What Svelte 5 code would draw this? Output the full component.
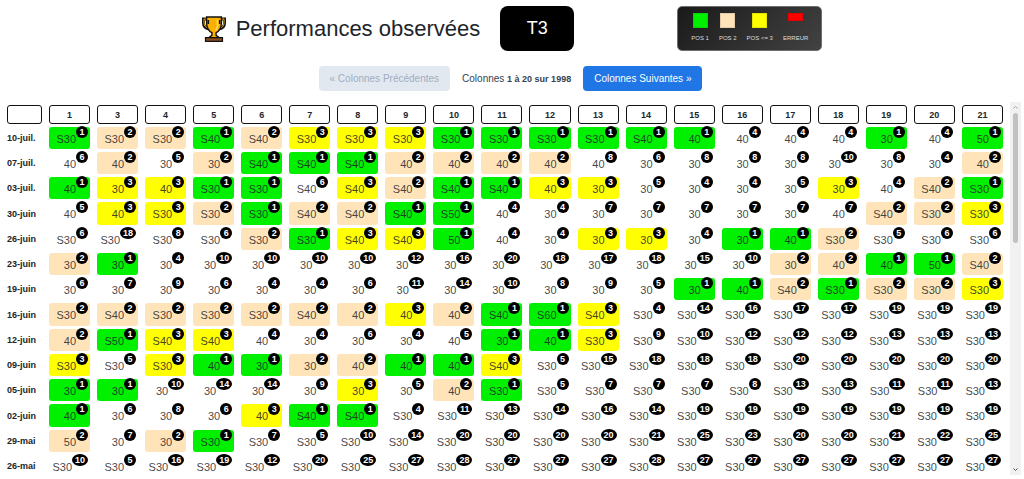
<script>
    const legend = [
        { label: 'POS 1', kind: 'first' },
        { label: 'POS 2', kind: 'second' },
        { label: 'POS <= 3', kind: 'third' },
        { label: 'ERREUR', kind: 'error' }
    ];

    const columns = [1, 3, 4, 5, 6, 7, 8, 9, 10, 11, 12, 13, 14, 15, 16, 17, 18, 19, 20, 21];

    // each entry is value:position
    const source = [
        ['10-juil.', 'S30:1 S30:2 S30:2 S40:1 S40:2 S30:3 S30:3 S30:3 S30:1 S30:1 S30:1 S30:1 S40:1 40:1 40:4 40:4 40:4 30:1 40:4 50:1'],
        ['07-juil.', '40:6 40:2 30:5 30:2 S40:1 S40:1 S40:1 40:2 40:2 40:2 40:2 40:8 30:6 30:8 30:8 30:8 30:10 30:8 30:4 40:2'],
        ['03-juil.', '40:1 30:3 40:3 S30:1 S30:1 S40:6 S40:3 S40:2 S40:1 S40:1 40:3 30:3 30:5 30:4 30:4 30:5 30:3 40:4 S40:2 S30:1'],
        ['30-juin', '40:5 40:3 S30:3 S30:2 S30:1 S40:2 S40:2 S40:1 S50:1 40:4 30:4 30:7 30:7 30:7 30:7 30:7 40:7 S40:2 S30:2 S30:3'],
        ['26-juin', 'S30:6 S30:18 S30:8 S30:6 S30:2 S30:1 S40:3 S40:3 50:1 40:4 30:4 30:3 30:3 30:4 30:1 40:1 S30:2 S30:5 S30:6 S30:6'],
        ['23-juin', '30:2 30:1 30:4 30:10 30:10 30:10 30:10 30:12 30:16 30:20 30:18 30:17 30:18 30:15 30:10 30:2 40:2 40:1 50:1 S40:2'],
        ['19-juin', '30:6 30:7 30:9 30:6 30:4 30:4 30:6 30:11 30:14 30:10 30:8 30:9 30:5 30:1 40:1 S40:2 S30:1 S30:2 S30:2 S30:3'],
        ['16-juin', 'S30:2 S40:2 S30:2 S30:2 S30:2 S40:2 40:2 40:3 40:2 S40:1 S60:1 S40:3 S30:4 S30:14 S30:16 S30:17 S30:17 S30:19 S30:19 S30:19'],
        ['12-juin', '40:2 S50:1 S40:3 S40:3 40:4 30:4 30:6 30:4 40:5 30:1 40:1 S30:3 S30:9 S30:10 S30:12 S30:12 S30:12 S30:13 S30:13 S30:13'],
        ['09-juin', 'S30:3 S30:5 S30:3 40:1 30:1 30:2 40:2 40:1 40:1 S40:3 S30:5 S30:15 S30:18 S30:18 S30:18 S30:20 S30:20 S30:20 S30:20 S30:20'],
        ['05-juin', '30:1 30:1 30:10 30:14 30:14 30:9 30:3 30:5 40:2 S30:1 S30:5 S30:7 S30:7 S30:7 S30:8 S30:13 S30:13 S30:11 S30:11 S30:13'],
        ['02-juin', '40:1 30:6 30:8 30:6 40:3 S40:1 S40:1 S30:4 S30:11 S30:13 S30:14 S30:16 S30:14 S30:19 S30:19 S30:19 S30:19 S30:19 S30:19 S30:19'],
        ['29-mai', '50:2 30:7 30:2 S30:1 S30:7 S30:5 S30:10 S30:14 S30:20 S30:20 S30:20 S30:20 S30:21 S30:25 S30:23 S30:20 S30:20 S30:21 S30:22 S30:25'],
        ['26-mai', 'S30:10 S30:5 S30:16 S30:19 S30:12 S30:20 S30:25 S30:27 S30:28 S30:27 S30:27 S30:27 S30:28 S30:27 S30:27 S30:27 S30:27 S30:27 S30:27 S30:27']
    ];

    const kinds = { 1: 'first', 2: 'second', 3: 'third' };

    const rows = source.map(([date, line]) => ({
        date,
        cells: line.split(' ').map((entry) => {
            const [value, position] = entry.split(':');
            return { value, position, kind: kinds[position] || '' };
        })
    }));
</script>

<div class="page">
    <header class="top">
        <h1>
            <svg class="trophy" viewBox="0 0 24 26" aria-hidden="true">
                <path d="M5 3H1.500V7c0 3.200 2.200 5.300 5.600 6M19 3h3.500V7c0 3.200-2.200 5.300-5.600 6" fill="none" stroke="#111" stroke-width="3" />
                <path d="M5 3H2V7c0 2.800 2 4.800 5 5.500M19 3h3V7c0 2.800-2 4.800-5 5.500" fill="none" stroke="#f5a800" stroke-width="1" />
                <path d="M4.600 1h14.800v5.500c0 5-2 8.600-5.300 10.200v2.600l4 3H5.900l4-3v-2.600C6.600 15 4.600 11.500 4.600 6.500z" fill="#fcb100" stroke="#111" stroke-width="1.400" />
                <path d="M3.500 21.700h17v3.600h-17z" fill="#8a4b20" stroke="#111" stroke-width="1.200" />
                <path d="M15.500 3.500v6c0 2-.8 3.600-2 4.800" fill="none" stroke="#ffd866" stroke-width="1.600" />
                <path d="M6.300 4v4M17.700 4v4" stroke="#111" stroke-width="1.600" />
            </svg>
            Performances observées
        </h1>
        <div class="race">T3</div>
        <ul class="legend">
            {#each legend as item}
                <li>
                    <span class="swatch {item.kind}"></span>
                    <span>{item.label}</span>
                </li>
            {/each}
        </ul>
    </header>

    <nav class="pager">
        <button type="button" disabled>« Colonnes Précédentes</button>
        <span>Colonnes <strong>1 à 20 sur 1998</strong></span>
        <button type="button">Colonnes Suivantes »</button>
    </nav>

    <main class="results">
        <div class="viewport">
            <table>
                <thead>
                    <tr>
                        <th class="date-head" aria-label="Date"></th>
                        {#each columns as column}
                            <th scope="col">{column}</th>
                        {/each}
                    </tr>
                </thead>
                <tbody>
                    {#each rows as row}
                        <tr>
                            <th scope="row">{row.date}</th>
                            {#each row.cells as cell}
                                <td class={cell.kind}>
                                    <div class="cell">
                                        <span class="value">{cell.value}</span>
                                        <span class="position">{cell.position}</span>
                                    </div>
                                </td>
                            {/each}
                        </tr>
                    {/each}
                </tbody>
            </table>
        </div>
        <div class="scrollbar" aria-hidden="true">
            <svg viewBox="0 0 11 11"><path d="M3.500 6.500l2-2 2 2" stroke="#a3a3a3" /></svg>
            <div class="track"><div class="thumb"></div></div>
            <svg viewBox="0 0 11 11"><path d="M3.500 4.500l2 2 2-2" stroke="#505050" /></svg>
        </div>
    </main>
</div>

<style>
    :global(body) {
        margin: 0;
        background: #fff;
    }

    .page {
        display: flex;
        flex-direction: column;
        box-sizing: border-box;
        height: 100vh;
        padding: 6px 3px 4px 0;
        font-family: "Liberation Sans", Arial, sans-serif;
        color: #212529;
    }

    .top {
        display: flex;
        justify-content: center;
        align-items: center;
        padding-left: 3px;
    }

    h1 {
        display: flex;
        align-items: center;
        gap: 10px;
        margin: 0 20px 0 0;
        font-size: 22px;
        font-weight: 400;
        line-height: 40px;
    }

    .trophy {
        width: 24px;
        height: 26px;
    }

    .race {
        width: 74px;
        margin-right: 103px;
        border-radius: 8px;
        background: #000;
        color: #fff;
        font-size: 18px;
        line-height: 45px;
        text-align: center;
    }

    .legend {
        display: flex;
        gap: 10px;
        box-sizing: border-box;
        height: 45px;
        margin: 0;
        padding: 6px 13px 8px;
        border: 1px solid #6b6f6f;
        border-radius: 5px;
        background: linear-gradient(135deg, #1a1a1a, #424242);
        list-style: none;
        color: #ddd;
        font-size: 6px;
        line-height: 8px;
    }

    .legend li {
        display: flex;
        flex-direction: column;
        justify-content: space-between;
        align-items: center;
    }

    .swatch {
        box-sizing: border-box;
        width: 15px;
        height: 15px;
        border: 1px solid rgba(0, 0, 0, 0.1);
    }

    .first {
        background: #00f000;
    }

    .second {
        background: #ffe4b9;
    }

    .third {
        background: #ff0;
    }

    .error {
        height: 8px;
        background: #f00;
    }

    .pager {
        display: flex;
        justify-content: center;
        align-items: center;
        gap: 12px;
        margin: 15px 0 11px;
        color: #374151;
        font-size: 10px;
    }

    .pager strong {
        font-size: 9px;
    }

    .pager button {
        height: 25px;
        padding: 0 11px;
        border: 0;
        border-radius: 4px;
        background: #1f76e4;
        color: #fff;
        font: inherit;
    }

    .pager button:disabled {
        background: #e2e8f0;
        color: #a0aec0;
    }

    .results {
        display: flex;
        flex: 1;
        min-height: 0;
    }

    .viewport {
        flex: 1;
        overflow: hidden;
    }

    table {
        width: 100%;
        border-collapse: separate;
        border-spacing: 7px 3px;
        table-layout: fixed;
    }

    th {
        box-sizing: border-box;
        padding: 0;
        font-size: 9px;
        line-height: 12px;
    }

    thead th {
        height: 19px;
        border: 1px solid #111;
        border-radius: 3px;
    }

    .date-head {
        width: 35px;
    }

    tbody th {
        text-align: left;
        white-space: nowrap;
    }

    td {
        height: 22px;
        padding: 0;
        border-radius: 3px;
        vertical-align: top;
    }

    /* a little more air after each block of four dates */
    tbody tr:nth-child(4n) td {
        height: 23px;
    }

    .cell {
        display: flex;
        justify-content: flex-end;
        align-items: flex-start;
        height: 22px;
        padding-right: 2px;
    }

    .value {
        color: rgba(33, 37, 41, 0.85);
        font-size: 11px;
        line-height: 24px;
    }

    .position {
        box-sizing: border-box;
        min-width: 12px;
        margin-top: -1px;
        padding: 0 3px;
        border-radius: 50%;
        background: #000;
        color: #fff;
        font-size: 9px;
        font-weight: 700;
        line-height: 12px;
        text-align: center;
    }

    .scrollbar {
        display: flex;
        flex-direction: column;
        width: 11px;
        background: #f1f1f1;
    }

    .scrollbar svg {
        width: 11px;
        height: 11px;
        fill: none;
    }

    .track {
        flex: 1;
        padding: 0 3px;
    }

    .thumb {
        height: 37%;
        border-radius: 3px;
        background: #c1c1c1;
    }
</style>
